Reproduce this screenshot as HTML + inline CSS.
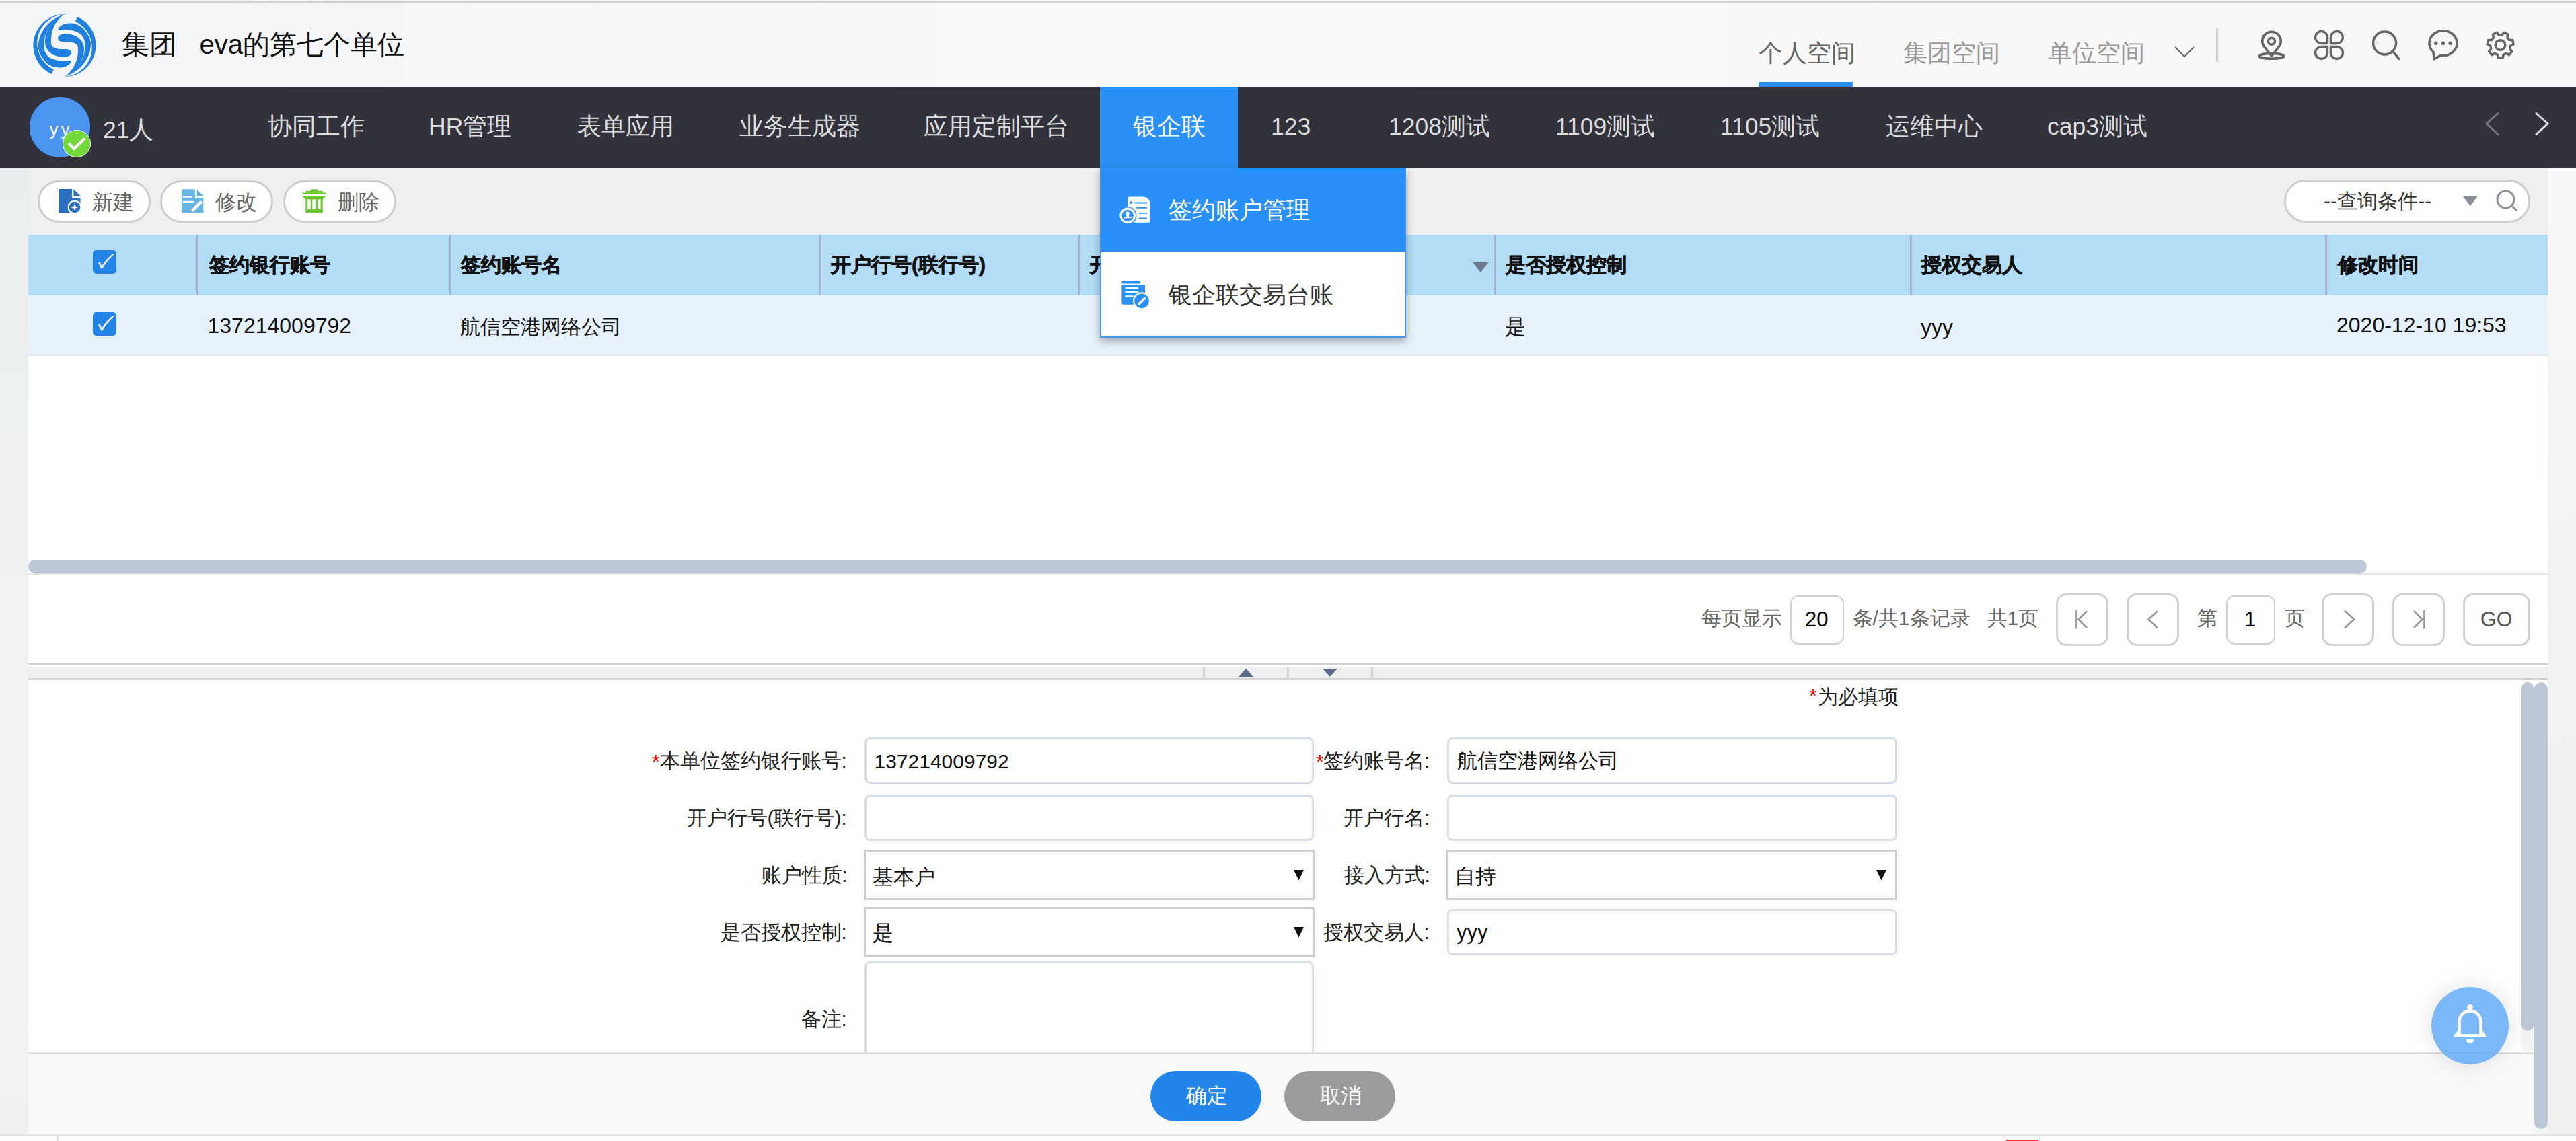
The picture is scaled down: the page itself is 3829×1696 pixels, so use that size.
<!DOCTYPE html>
<html><head><meta charset="utf-8">
<style>
*{box-sizing:border-box;margin:0;padding:0}
html,body{width:3829px;height:1696px;overflow:hidden;background:#fff}
body{position:relative;font-family:"Liberation Sans",sans-serif;color:#222}
.a{position:absolute}
.t{position:absolute;white-space:nowrap;line-height:1}
svg{position:absolute;overflow:visible}
</style></head><body>

<!-- ===== HEADER ===== -->
<div class="a" style="left:0;top:0;width:3829px;height:129px;background:linear-gradient(90deg,#f3f5f6 0%,#f7f8f8 30%,#f9f9f9 50%,#f7f7f7 100%)"></div>
<div class="a" style="left:0;top:2px;width:3829px;height:2px;background:#d2d2d2"></div>

<!-- logo -->
<svg style="left:49px;top:21px" width="94" height="93" viewBox="100 75 1005 1000">
 <g id="lh" fill="#1f80e0">
  <path d="M810 118 A502 502 0 0 1 560 1075 A465 465 0 0 0 775 190 Z"/>
  <path d="M497 318 C520 250 620 215 700 220 C800 225 880 270 930 340 C990 420 1022 480 1022 560 C1020 760 880 980 620 1070 C840 960 935 760 931 560 C930 470 880 400 820 370 C740 330 650 318 560 330 C520 336 500 336 497 318 Z"/>
  <path d="M495 450 C510 385 650 368 780 425 C860 470 915 540 915 630 C908 820 800 1000 610 1072 C760 960 830 800 816 600 C810 545 740 515 620 515 C545 515 495 515 495 450 Z"/>
 </g>
 <use href="#lh" transform="rotate(180 602 575)"/>
</svg>
<div class="t" style="left:181px;top:46px;font-size:41px;color:#111">集团</div>
<div class="t" style="left:296.6px;top:46px;font-size:40px;color:#111">eva的第七个单位</div>

<!-- header tabs -->
<div class="t" style="left:2614px;top:62px;font-size:35.5px;color:#666">个人空间</div>
<div class="t" style="left:2829px;top:62px;font-size:35.5px;color:#999">集团空间</div>
<div class="t" style="left:3044px;top:62px;font-size:35.5px;color:#999">单位空间</div>
<div class="a" style="left:2614px;top:122px;width:140px;height:7px;background:#2a8ef5"></div>
<svg style="left:3232px;top:69px" width="30" height="17" viewBox="0 0 30 17"><path d="M1 1 L15 15 L29 1" fill="none" stroke="#666" stroke-width="2"/></svg>
<div class="a" style="left:3294px;top:42px;width:3px;height:50px;background:#cfcfcf"></div>

<!-- header icons -->
<svg style="left:3350px;top:40px" width="54" height="54" viewBox="0 0 54 54">
 <g fill="none" stroke="#666" stroke-width="3.5">
  <path d="M26.5 43.5 L15 28.5 A13.75 13.75 0 1 1 38 28.5 Z" stroke-linejoin="round"/>
  <circle cx="26.5" cy="21.2" r="5"/>
  <ellipse cx="26.5" cy="43.4" rx="18.25" ry="3.8"/>
 </g>
</svg>
<svg style="left:3435px;top:40px" width="54" height="54" viewBox="0 0 54 54">
 <g fill="none" stroke="#666" stroke-width="3.5">
  <path d="M24.5 24.5 H15 A9 9 0 1 1 24.5 15 Z"/>
  <path d="M29.5 24.5 H39 A9 9 0 1 0 29.5 15 Z"/>
  <path d="M24.5 29.5 H15 A9 9 0 1 0 24.5 39 Z"/>
  <path d="M29.5 29.5 H39 A9 9 0 1 1 29.5 39 Z"/>
 </g>
</svg>
<svg style="left:3520px;top:40px" width="54" height="54" viewBox="0 0 54 54">
 <g fill="none" stroke="#666" stroke-width="3.5">
  <circle cx="24.6" cy="24" r="17"/>
  <path d="M36 35.5 L46 47.5" stroke-linecap="round"/>
 </g>
</svg>
<svg style="left:3605px;top:40px" width="54" height="54" viewBox="0 0 54 54">
 <g fill="none" stroke="#666" stroke-width="3.5" stroke-linejoin="round">
  <path d="M12 37.3 A20.5 18.5 0 1 1 23 42.4 L13 47.8 Z" stroke-linejoin="miter"/>
 </g>
 <g fill="#666"><circle cx="15.7" cy="24.2" r="2.8"/><circle cx="26.4" cy="24.2" r="2.8"/><circle cx="37.2" cy="24.2" r="2.8"/></g>
</svg>
<svg style="left:3690px;top:40px" width="54" height="54" viewBox="0 0 54 54">
 <g fill="none" stroke="#666" stroke-width="3.5" stroke-linejoin="round">
  <path d="M31.09 41.34 L30.09 46.20 L23.31 46.20 L22.31 41.34 L18.22 39.37 L13.80 41.62 L9.57 36.33 L12.75 32.51 L11.74 28.08 L7.22 26.03 L8.73 19.43 L13.69 19.53 L16.52 15.98 L15.32 11.17 L21.42 8.23 L24.43 12.17 L28.97 12.17 L31.98 8.23 L38.08 11.17 L36.88 15.98 L39.71 19.53 L44.67 19.43 L46.18 26.03 L41.66 28.08 L40.65 32.51 L43.83 36.33 L39.60 41.62 L35.18 39.37 Z"/>
  <circle cx="26.5" cy="27" r="7.3"/>
 </g>
</svg>

<!-- ===== NAV ===== -->
<div class="a" style="left:0;top:129px;width:3829px;height:120px;background:#31323b"></div>
<div class="a" style="left:44px;top:144px;width:90px;height:90px;border-radius:50%;background:#4b95f1"></div>
<div class="t" style="left:73.5px;top:178.5px;font-size:26px;letter-spacing:4px;color:#fff">yy</div>
<div class="a" style="left:93px;top:192.5px;width:41.5px;height:41.5px;border-radius:50%;background:#73d83a;border:1.2px solid #fff"></div>
<svg style="left:93px;top:192px" width="42" height="42" viewBox="0 0 42 42"><path d="M9 21 L17 29 L33 13.5" fill="none" stroke="#fff" stroke-width="4.3"/></svg>
<div class="t" style="left:153px;top:176px;font-size:35.5px;color:#ddd">21人</div>

<div class="a" style="left:1635px;top:129px;width:205px;height:120px;background:#2a90f5"></div>
<div class="t" style="left:398px;top:171px;font-size:35.5px;color:#ddd">协同工作</div>
<div class="t" style="left:637px;top:171px;font-size:35.5px;color:#ddd">HR管理</div>
<div class="t" style="left:858px;top:171px;font-size:35.5px;color:#ddd">表单应用</div>
<div class="t" style="left:1099px;top:171px;font-size:35.5px;color:#ddd">业务生成器</div>
<div class="t" style="left:1373px;top:171px;font-size:35.5px;color:#ddd">应用定制平台</div>
<div class="t" style="left:1684px;top:171px;font-size:35.5px;color:#fff">银企联</div>
<div class="t" style="left:1889px;top:171px;font-size:35.5px;color:#ddd">123</div>
<div class="t" style="left:2064px;top:171px;font-size:35.5px;color:#ddd">1208测试</div>
<div class="t" style="left:2312px;top:171px;font-size:35.5px;color:#ddd">1109测试</div>
<div class="t" style="left:2557px;top:171px;font-size:35.5px;color:#ddd">1105测试</div>
<div class="t" style="left:2803px;top:171px;font-size:35.5px;color:#ddd">运维中心</div>
<div class="t" style="left:3043px;top:171px;font-size:35.5px;color:#ddd">cap3测试</div>
<svg style="left:3690px;top:165px" width="30" height="38" viewBox="0 0 30 38"><path d="M23 3.5 L6 19 L23 34.5" fill="none" stroke="#78787f" stroke-width="3" stroke-linecap="round"/></svg>
<svg style="left:3764px;top:165px" width="30" height="38" viewBox="0 0 30 38"><path d="M6 3.5 L23 19 L6 34.5" fill="none" stroke="#ddd" stroke-width="3" stroke-linecap="round"/></svg>

<!-- ===== SIDE STRIPS / TOOLBAR ===== -->
<div class="a" style="left:0;top:249px;width:42px;height:1437px;background:linear-gradient(180deg,#e9eded 0%,#edf0f0 25%,#f0f1f1 50%,#f0f0f0 100%)"></div>
<div class="a" style="left:3787px;top:249px;width:42px;height:1437px;background:linear-gradient(180deg,#f7f8fa 0%,#f2f3f4 30%,#f0f0f1 60%,#f0f0f0 100%)"></div>
<div class="a" style="left:42px;top:249px;width:3745px;height:100px;background:#efefef"></div>

<div class="a" style="left:55.5px;top:267.5px;width:168.5px;height:63.5px;border:3px solid #cdcdcd;border-radius:32px;background:#fff"></div>
<div class="a" style="left:237.5px;top:267.5px;width:168.5px;height:63.5px;border:3px solid #cdcdcd;border-radius:32px;background:#fff"></div>
<div class="a" style="left:420.5px;top:267.5px;width:168.5px;height:63.5px;border:3px solid #cdcdcd;border-radius:32px;background:#fff"></div>
<svg style="left:80px;top:272px" width="50" height="50" viewBox="0 0 50 50">
 <path d="M9 9 H27 V22 H39.5 V30 L31 44.3 H9 A2 2 0 0 1 7 42.3 V11 A2 2 0 0 1 9 9 Z" fill="#2b6fc0"/>
 <path d="M29.4 9.2 V19.3 H39.7 Z" fill="#2b6fc0"/>
 <circle cx="31" cy="36" r="10.5" fill="#fff"/>
 <circle cx="31" cy="36" r="8.3" fill="#2b6fc0"/>
 <path d="M31 30.2 L32.4 34.6 L36.8 36 L32.4 37.4 L31 41.8 L29.6 37.4 L25.2 36 L29.6 34.6 Z" fill="#fff"/>
</svg>
<svg style="left:262px;top:272px" width="50" height="50" viewBox="0 0 50 50">
 <path d="M10 9.2 H27.8 V21.9 H40.3 V42.3 A2 2 0 0 1 38.3 44.3 H10 A2 2 0 0 1 8.1 42.3 V11.2 A2 2 0 0 1 10 9.2 Z" fill="#66b5e2"/>
 <path d="M30.7 9.4 V19.3 H40.5 Z" fill="#66b5e2"/>
 <path d="M10.7 20.6 H22.8 M10.7 28 H25" stroke="#fff" stroke-width="2.3" stroke-linecap="round"/>
 <path d="M24.5 40.3 L36.4 28.9" stroke="#fff" stroke-width="4.5" stroke-linecap="round"/>
</svg>
<svg style="left:442px;top:272px" width="50" height="50" viewBox="0 0 50 50">
 <g fill="#6ac82e">
  <rect x="7.2" y="14.5" width="35.5" height="2.6" rx="1.2"/>
  <rect x="12.7" y="11.8" width="25" height="3"/>
  <rect x="20.2" y="9.2" width="9.6" height="3" rx="1"/>
  <path d="M7.2 19.5 H42.7 L37.7 24.5 V44.3 H12.3 V24.5 Z"/>
 </g>
 <g fill="#fff"><rect x="14.9" y="24.5" width="4.8" height="14.5"/><rect x="22.3" y="24.5" width="4.9" height="14.5"/><rect x="30.2" y="24.5" width="4.4" height="14.5"/></g>
</svg>
<div class="t" style="left:136.5px;top:285px;font-size:31px;color:#666">新建</div>
<div class="t" style="left:319.5px;top:285px;font-size:31px;color:#666">修改</div>
<div class="t" style="left:501.5px;top:285px;font-size:31px;color:#666">删除</div>

<!-- search pill -->
<div class="a" style="left:3395px;top:267.3px;width:365.6px;height:64px;border:3px solid #cdcdcd;border-radius:32px;background:#fff"></div>
<div class="t" style="left:3454px;top:283.5px;font-size:30.3px;color:#333">--查询条件--</div>
<svg style="left:3661px;top:292px" width="22" height="14" viewBox="0 0 22 14"><path d="M0 0 H21.6 L10.8 14 Z" fill="#8a8f99"/></svg>
<svg style="left:3708px;top:280px" width="38" height="38" viewBox="0 0 38 38"><g fill="none" stroke="#8a9099" stroke-width="3"><circle cx="16.5" cy="16.5" r="12.5"/><path d="M25.5 25.5 L33 33"/></g></svg>

<!-- ===== TABLE ===== -->
<div class="a" style="left:42px;top:349px;width:3745px;height:90px;background:#b3dcf7"></div>
<div class="a" style="left:42px;top:439px;width:3745px;height:87px;background:#e6f1fb"></div>
<div class="a" style="left:42px;top:526px;width:3745px;height:3px;background:#e8e9eb"></div>
<div class="a" style="left:292px;top:349px;width:3px;height:90px;background:#a6b2cf"></div>
<div class="a" style="left:667.5px;top:349px;width:3px;height:90px;background:#a6b2cf"></div>
<div class="a" style="left:1217.5px;top:349px;width:3px;height:90px;background:#a6b2cf"></div>
<div class="a" style="left:1602.5px;top:349px;width:3px;height:90px;background:#a6b2cf"></div>
<div class="a" style="left:2221px;top:349px;width:3px;height:90px;background:#a6b2cf"></div>
<div class="a" style="left:2838.5px;top:349px;width:3px;height:90px;background:#a6b2cf"></div>
<div class="a" style="left:3456px;top:349px;width:3px;height:90px;background:#a6b2cf"></div>

<div class="a" style="left:138px;top:371.75px;width:35px;height:35px;border-radius:5px;background:#2384e8"></div>
<svg style="left:138px;top:371.75px" width="35" height="35" viewBox="0 0 35 35"><path d="M7.8 18.5 C8.8 17.9 10 17.8 10.8 18.1 C11.8 20 12.5 22 13.2 24 C17 18 23 10 29.5 5.6 C30.8 5 32 4.8 32.8 5 C26 10.5 19 19 14.8 26.5 C14 27.6 12.5 27.6 12 27 C10.8 24 9.5 21 7.8 18.5 Z" fill="#fff"/></svg>
<div class="a" style="left:138px;top:463.75px;width:35px;height:35px;border-radius:5px;background:#2384e8"></div>
<svg style="left:138px;top:463.75px" width="35" height="35" viewBox="0 0 35 35"><path d="M7.8 18.5 C8.8 17.9 10 17.8 10.8 18.1 C11.8 20 12.5 22 13.2 24 C17 18 23 10 29.5 5.6 C30.8 5 32 4.8 32.8 5 C26 10.5 19 19 14.8 26.5 C14 27.6 12.5 27.6 12 27 C10.8 24 9.5 21 7.8 18.5 Z" fill="#fff"/></svg>

<div class="t" style="left:311px;top:378.5px;font-size:30px;font-weight:bold;color:#111;-webkit-text-stroke:0.7px #111">签约银行账号</div>
<div class="t" style="left:685px;top:378.5px;font-size:30px;font-weight:bold;color:#111;-webkit-text-stroke:0.7px #111">签约账号名</div>
<div class="t" style="left:1235px;top:378.5px;font-size:30px;font-weight:bold;color:#111;-webkit-text-stroke:0.7px #111">开户行号(联行号)</div>
<div class="t" style="left:1620px;top:378.5px;font-size:30px;font-weight:bold;color:#111;-webkit-text-stroke:0.7px #111">开户行名</div>
<svg style="left:2189px;top:390px" width="24" height="15" viewBox="0 0 24 15"><path d="M0 0 H23.5 L11.75 15 Z" fill="#6b7a8c"/></svg>
<div class="t" style="left:2237.5px;top:378.5px;font-size:30px;font-weight:bold;color:#111;-webkit-text-stroke:0.7px #111">是否授权控制</div>
<div class="t" style="left:2856px;top:378.5px;font-size:30px;font-weight:bold;color:#111;-webkit-text-stroke:0.7px #111">授权交易人</div>
<div class="t" style="left:3475px;top:378.5px;font-size:30px;font-weight:bold;color:#111;-webkit-text-stroke:0.7px #111">修改时间</div>

<div class="t" style="left:308.5px;top:467.5px;font-size:32px;color:#111">137214009792</div>
<div class="t" style="left:684px;top:470.5px;font-size:30px;color:#111">航信空港网络公司</div>
<div class="t" style="left:2237px;top:470px;font-size:30.5px;color:#111">是</div>
<div class="t" style="left:2855px;top:470px;font-size:32px;color:#111">yyy</div>
<div class="t" style="left:3473px;top:467px;font-size:32px;color:#111">2020-12-10 19:53</div>

<!-- dropdown -->
<div class="a" style="left:1635px;top:248.5px;width:455px;height:253px;border:2px solid #4596f2;background:#fff;box-shadow:0 5px 12px rgba(0,0,0,.32)"></div>
<div class="a" style="left:1637px;top:249px;width:451px;height:125px;background:#2890f8"></div>
<svg style="left:1660px;top:286px" width="56" height="56" viewBox="0 0 56 56">
 <path d="M18.5 6.6 H39.6 A10 10 0 0 1 49.6 16.6 V42.7 A2 2 0 0 1 47.6 44.7 H16.4 V8.6 A2 2 0 0 1 18.5 6.6 Z" fill="#fff"/>
 <circle cx="21.1" cy="15" r="2" fill="#2890f8"/>
 <path d="M27 15.5 H44.2 M29.4 22.8 H44.2 M33.4 30.9 H44.2 M33.4 38.5 H44.2" stroke="#2890f8" stroke-width="1.8" stroke-linecap="round"/>
 <circle cx="16.2" cy="34.4" r="13.3" fill="#2890f8"/>
 <circle cx="16.2" cy="34.4" r="11.8" fill="#fff"/>
 <circle cx="16.2" cy="34.4" r="8.6" fill="#2890f8"/>
 <circle cx="16.2" cy="31" r="2.6" fill="#fff"/>
 <path d="M14.8 33 H17.6 L18.5 36.3 H21.5 V38.2 H10.9 V36.3 H13.9 Z" fill="#fff"/>
 <rect x="10.5" y="39" width="11.5" height="1" fill="#fff"/>
</svg>
<div class="t" style="left:1736.5px;top:294.5px;font-size:35.4px;color:#fff">签约账户管理</div>
<svg style="left:1660px;top:410px" width="56" height="56" viewBox="0 0 56 56">
 <rect x="7.4" y="7.1" width="27.4" height="4.4" rx="1.5" fill="#2890f8"/>
 <path d="M9 13 H40.4 A1.6 1.6 0 0 1 42 14.6 V42.7 H9 A1.6 1.6 0 0 1 7.4 41.1 V14.6 A1.6 1.6 0 0 1 9 13 Z" fill="#2890f8"/>
 <path d="M13.3 17.9 H31.4 M13.3 24 H31.4 M13.3 30.2 H24" stroke="#fff" stroke-width="2" stroke-linecap="round"/>
 <circle cx="37" cy="37.3" r="13" fill="#fff"/>
 <circle cx="37" cy="37.3" r="10.8" fill="#2890f8"/>
 <path d="M33 42 L41.5 33.5" stroke="#fff" stroke-width="3.5" stroke-linecap="round"/>
</svg>
<div class="t" style="left:1737px;top:420px;font-size:35px;color:#333">银企联交易台账</div>

<!-- ===== H SCROLL / PAGINATION ===== -->
<div class="a" style="left:42px;top:832px;width:3476px;height:20px;border-radius:10px;background:#bec7d5"></div>
<div class="a" style="left:42px;top:852px;width:3745px;height:2px;background:#e4e4e4"></div>

<div class="t" style="left:2529px;top:904px;font-size:30px;color:#666">每页显示</div>
<div class="a" style="left:2661px;top:884.5px;width:79.5px;height:73.5px;border:2.5px solid #d0d0d0;border-radius:12px;background:#fff"></div>
<div class="t" style="left:2683px;top:905px;font-size:31px;color:#000">20</div>
<div class="t" style="left:2753.5px;top:904px;font-size:30px;color:#666">条/共1条记录</div>
<div class="t" style="left:2953.5px;top:904px;font-size:30px;color:#666">共1页</div>
<div class="a" style="left:3055.5px;top:881.5px;width:78.5px;height:78.5px;border:3px solid #d0d0d0;border-radius:15px"></div>
<div class="a" style="left:3160.5px;top:881.5px;width:78.5px;height:78.5px;border:3px solid #d0d0d0;border-radius:15px"></div>
<div class="a" style="left:3450.5px;top:881.5px;width:78.5px;height:78.5px;border:3px solid #d0d0d0;border-radius:15px"></div>
<div class="a" style="left:3555.5px;top:881.5px;width:78.5px;height:78.5px;border:3px solid #d0d0d0;border-radius:15px"></div>
<div class="a" style="left:3660.5px;top:881.5px;width:100.5px;height:78.5px;border:3px solid #d0d0d0;border-radius:15px"></div>
<svg style="left:3055.5px;top:881.5px" width="79" height="79" viewBox="0 0 79 79"><path d="M30.5 25 V52.5 M46 26.2 L33.5 38.5 L46 51.2" fill="none" stroke="#9a9a9a" stroke-width="2.7"/></svg>
<svg style="left:3160.5px;top:881.5px" width="79" height="79" viewBox="0 0 79 79"><path d="M46 26.2 L32.4 38.5 L46 51.2" fill="none" stroke="#9a9a9a" stroke-width="2.7"/></svg>
<div class="t" style="left:3265.5px;top:904px;font-size:30px;color:#666">第</div>
<div class="a" style="left:3308.5px;top:884.5px;width:73.5px;height:73.5px;border:2.5px solid #d0d0d0;border-radius:12px;background:#fff"></div>
<div class="t" style="left:3336px;top:905px;font-size:31px;color:#000">1</div>
<div class="t" style="left:3395.5px;top:904px;font-size:30px;color:#666">页</div>
<svg style="left:3450.5px;top:881.5px" width="79" height="79" viewBox="0 0 79 79"><path d="M34 25.5 L48 38.5 L34 51.5" fill="none" stroke="#9a9a9a" stroke-width="2.7"/></svg>
<svg style="left:3555.5px;top:881.5px" width="79" height="79" viewBox="0 0 79 79"><path d="M32 26 L44.5 38.5 L32 51 M47.5 25 V52.5" fill="none" stroke="#9a9a9a" stroke-width="2.7"/></svg>
<div class="t" style="left:3687px;top:905px;font-size:30.5px;color:#555">GO</div>

<!-- ===== SPLITTER ===== -->
<div class="a" style="left:42px;top:986px;width:3745px;height:3px;background:#cfcfcf"></div>
<div class="a" style="left:42px;top:992px;width:3745px;height:16px;background:#efefef"></div>
<div class="a" style="left:42px;top:1008px;width:3745px;height:3px;background:#cfcfcf"></div>
<div class="a" style="left:1788px;top:992px;width:3px;height:16px;background:#cfcfcf"></div>
<div class="a" style="left:1913px;top:992px;width:3px;height:16px;background:#cfcfcf"></div>
<div class="a" style="left:2038px;top:992px;width:3px;height:16px;background:#cfcfcf"></div>
<svg style="left:1841px;top:994px" width="22" height="12" viewBox="0 0 22 12"><path d="M0 12 H22 L11 0 Z" fill="#5a6b88"/></svg>
<svg style="left:1966px;top:994px" width="22" height="12" viewBox="0 0 22 12"><path d="M0 0 H22 L11 12 Z" fill="#5a6b88"/></svg>

<!-- ===== FORM ===== -->
<div class="t" style="left:2689px;top:1019px;font-size:30px;color:#e00">*</div>
<div class="t" style="left:2701.5px;top:1020.5px;font-size:30px;color:#222">为必填项</div>

<div class="t" style="left:969px;top:1117px;font-size:30px;color:#e00">*</div>
<div class="t" style="left:980.5px;top:1115.5px;font-size:30px;color:#222">本单位签约银行账号:</div>
<div class="t" style="left:1956px;top:1117px;font-size:30px;color:#e00">*</div>
<div class="t" style="left:1967px;top:1115.5px;font-size:30px;color:#222">签约账号名:</div>
<div class="t" style="left:1020.5px;top:1200.5px;font-size:30px;color:#222">开户行号(联行号):</div>
<div class="t" style="left:1997px;top:1200.5px;font-size:30px;color:#222">开户行名:</div>
<div class="t" style="left:1131.5px;top:1285.5px;font-size:30px;color:#222">账户性质:</div>
<div class="t" style="left:1997.5px;top:1285.5px;font-size:30px;color:#222">接入方式:</div>
<div class="t" style="left:1070.5px;top:1370.5px;font-size:30px;color:#222">是否授权控制:</div>
<div class="t" style="left:1966.5px;top:1370.5px;font-size:30px;color:#222">授权交易人:</div>
<div class="t" style="left:1190.5px;top:1499.5px;font-size:30px;color:#222">备注:</div>

<div class="a" style="left:1284.5px;top:1095.5px;width:668.5px;height:69px;border:3px solid #d9dde5;border-radius:8px"></div>
<div class="a" style="left:2150.5px;top:1095.5px;width:669px;height:69px;border:3px solid #d9dde5;border-radius:8px"></div>
<div class="a" style="left:1284.5px;top:1180.5px;width:668.5px;height:69px;border:3px solid #d9dde5;border-radius:8px"></div>
<div class="a" style="left:2150.5px;top:1180.5px;width:669px;height:69px;border:3px solid #d9dde5;border-radius:8px"></div>
<div class="a" style="left:1284px;top:1263px;width:670px;height:74.5px;border:3px solid #cecece"></div>
<div class="a" style="left:2150px;top:1263px;width:670px;height:74.5px;border:3px solid #cecece"></div>
<div class="a" style="left:1284px;top:1348px;width:670px;height:74.5px;border:3px solid #cecece"></div>
<div class="a" style="left:2150.5px;top:1350.75px;width:669px;height:68.75px;border:3px solid #d9dde5;border-radius:8px"></div>
<div class="a" style="left:1284.5px;top:1428.75px;width:668.5px;height:200px;border:3px solid #d9dde5;border-radius:8px"></div>

<div class="t" style="left:1299.5px;top:1117px;font-size:30px;color:#111">137214009792</div>
<div class="t" style="left:2165.5px;top:1116px;font-size:30px;color:#111">航信空港网络公司</div>
<div class="t" style="left:1296.5px;top:1288px;font-size:30.5px;color:#111">基本户</div>
<div class="t" style="left:2162px;top:1286.5px;font-size:30.5px;color:#111">自持</div>
<div class="t" style="left:1296.5px;top:1371px;font-size:30.5px;color:#111">是</div>
<div class="t" style="left:2165px;top:1370px;font-size:31px;color:#111">yyy</div>
<svg style="left:1922.75px;top:1292.5px" width="15" height="16" viewBox="0 0 15 16"><path d="M0 0 H15 L7.5 15.5 Z" fill="#111"/></svg>
<svg style="left:2788.75px;top:1292.5px" width="15" height="16" viewBox="0 0 15 16"><path d="M0 0 H15 L7.5 15.5 Z" fill="#111"/></svg>
<svg style="left:1922.75px;top:1377.5px" width="15" height="16" viewBox="0 0 15 16"><path d="M0 0 H15 L7.5 15.5 Z" fill="#111"/></svg>

<!-- ===== FOOTER ===== -->
<div class="a" style="left:42px;top:1564px;width:3745px;height:3px;background:#e0e0e0"></div>
<div class="a" style="left:42px;top:1567px;width:3745px;height:119px;background:#f9f9f9"></div>
<div class="a" style="left:0;top:1686px;width:3829px;height:3px;background:#e3e3e3"></div>
<div class="a" style="left:84px;top:1689px;width:3px;height:7px;background:#e0e0e0"></div>
<div class="a" style="left:2982px;top:1694px;width:48px;height:2px;background:#ee3333"></div>

<div class="a" style="left:1710px;top:1591.8px;width:165px;height:75px;border-radius:38px;background:#2385e9"></div>
<div class="a" style="left:1909px;top:1591.8px;width:165px;height:75px;border-radius:38px;background:#9b9b9b"></div>
<div class="t" style="left:1762.5px;top:1613px;font-size:31px;color:#fff">确定</div>
<div class="t" style="left:1961.5px;top:1613px;font-size:31px;color:#fff">取消</div>

<!-- right v-scrollbars -->
<div class="a" style="left:3747px;top:1014px;width:20px;height:549px;border-radius:10px;background:#f3f3f3"></div>
<div class="a" style="left:3747px;top:1014px;width:20px;height:518px;border-radius:10px;background:#bec7d5"></div>
<div class="a" style="left:3767px;top:1014px;width:20px;height:672px;border-radius:10px 10px 0 0;background:#f3f3f3"></div>
<div class="a" style="left:3767px;top:1014px;width:20px;height:664px;border-radius:10px;background:#bec7d5"></div>

<!-- bell -->
<div class="a" style="left:3614px;top:1467px;width:115px;height:115px;border-radius:50%;background:rgba(99,172,247,.85);box-shadow:0 0 36px rgba(0,0,0,.12)"></div>
<svg style="left:3640px;top:1490px" width="64" height="64" viewBox="0 0 64 64">
 <circle cx="31.5" cy="7.2" r="4.3" fill="#fff"/>
 <path d="M15.5 47 V28.5 A16 16 0 0 1 47.5 28.5 V47" fill="none" stroke="#fff" stroke-width="4.6"/>
 <path d="M7.8 48.6 L13.2 42.3 V46.9 H49.8 V42.3 L55.1 48.6 V51.4 H7.8 Z" fill="#fff"/>
 <path d="M25.5 55 H37.5 A6 6 0 0 1 25.5 55 Z" fill="#fff"/>
</svg>

</body></html>
